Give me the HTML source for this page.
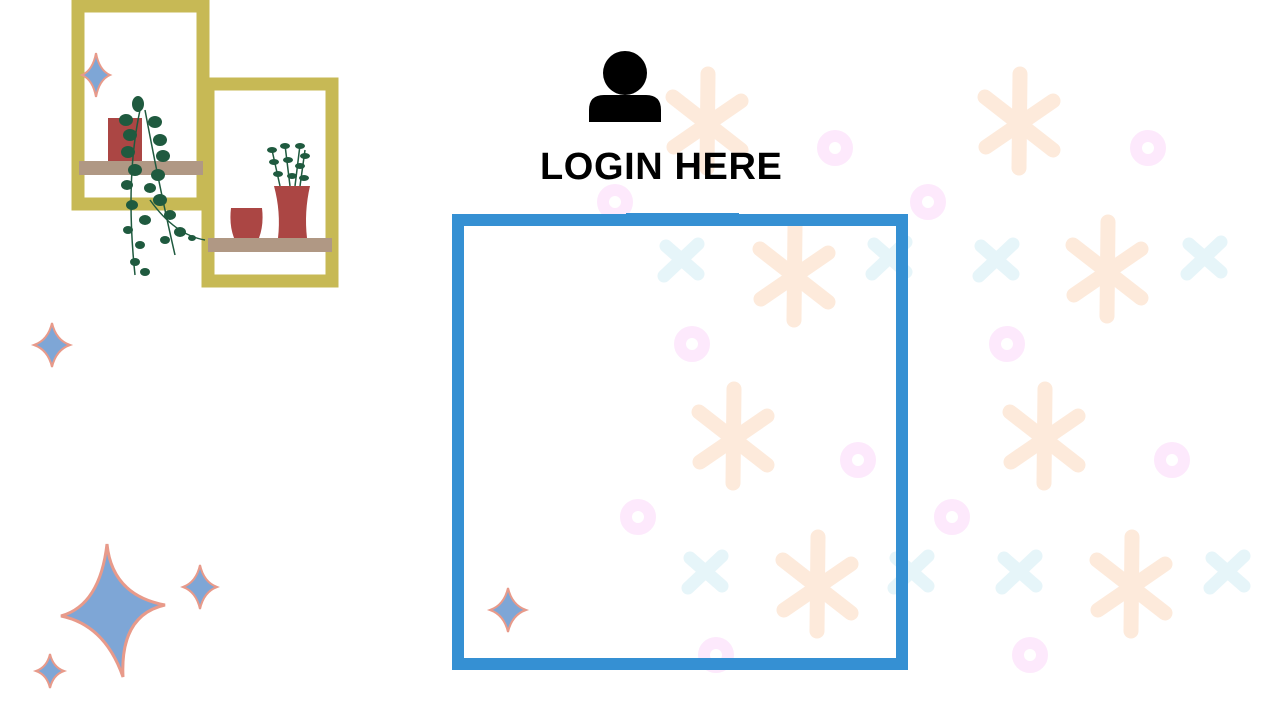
<!DOCTYPE html><html><head><style>html,body{margin:0;padding:0;background:#fff;width:1280px;height:720px;overflow:hidden}
svg{position:absolute;left:0;top:0}
.t{position:absolute;left:540px;top:146px;font-family:"Liberation Sans",sans-serif;font-weight:bold;font-size:38px;letter-spacing:0.6px;color:#000;}
</style></head><body>
<svg width="1280" height="720" viewBox="0 0 1280 720">
<defs>
<g id="ast" stroke="#fdeadb" stroke-width="15" stroke-linecap="round" fill="none">
<path d="M0 -46 L-1 48"/><path d="M-35 -23 L33 30"/><path d="M33 -19 L-34 27"/></g>
<circle id="cir" r="12" fill="none" stroke="#fde9fc" stroke-width="12"/>
<g id="crs" stroke="#e6f5f9" stroke-width="13" stroke-linecap="round"><path d="M-16 -14 L16 14 M16 -16 L-18 16"/></g>
<path id="sp" d="M0 -1 Q0.22 -0.22 1 0 Q0.22 0.22 0 1 Q-0.22 0.22 -1 0 Q-0.22 -0.22 0 -1Z" fill="#7ea6d6" stroke="#e89a8a" vector-effect="non-scaling-stroke" stroke-width="2"/>
</defs>
<g>
<use href="#ast" x="708" y="120"/><use href="#ast" x="1020" y="120"/>
<use href="#ast" x="795" y="272"/><use href="#ast" x="1108" y="268"/>
<use href="#ast" x="734" y="435"/><use href="#ast" x="1045" y="435"/>
<use href="#ast" x="818" y="583"/><use href="#ast" x="1132" y="583"/>
<use href="#cir" x="835" y="148"/><use href="#cir" x="1148" y="148"/>
<use href="#cir" x="928" y="202"/><use href="#cir" x="615" y="202"/>
<use href="#cir" x="692" y="344"/><use href="#cir" x="1007" y="344"/>
<use href="#cir" x="858" y="460"/><use href="#cir" x="1172" y="460"/>
<use href="#cir" x="638" y="517"/><use href="#cir" x="952" y="517"/>
<use href="#cir" x="716" y="655"/><use href="#cir" x="1030" y="655"/>
<use href="#crs" x="682" y="260"/><use href="#crs" x="890" y="258"/>
<use href="#crs" x="997" y="260"/><use href="#crs" x="1205" y="258"/>
<use href="#crs" x="706" y="572"/><use href="#crs" x="912" y="572"/>
<use href="#crs" x="1020" y="572"/><use href="#crs" x="1228" y="572"/>
</g>
<rect x="458" y="220" width="444" height="444" fill="none" stroke="#3590d3" stroke-width="12"/>
<rect x="626" y="213" width="113" height="4" fill="#3590d3"/>
<circle cx="625" cy="73" r="22" fill="#000"/>
<path d="M589 122 L589 110 Q589 95 604 95 L646 95 Q661 95 661 110 L661 122Z" fill="#000"/>
<rect x="78" y="6" width="125" height="198" fill="none" stroke="#c7b955" stroke-width="13"/>
<rect x="208" y="84" width="124" height="197" fill="#fff" stroke="#c7b955" stroke-width="13"/>
<rect x="108" y="118" width="34" height="45" fill="#ab4644"/>
<rect x="79" y="161" width="124" height="14" fill="#b09884"/>
<path d="M231 208 L262 208 Q264 225 259 238 L234 238 Q229 225 231 208Z" fill="#ab4644"/>
<path d="M274 186 L310 186 Q304 212 307 238 L278 238 Q281 212 274 186Z" fill="#ab4644"/>
<rect x="208" y="238" width="124" height="14" fill="#b09884"/>
<g fill="#1f5a3f" stroke="#1f5a3f" stroke-width="1.5">
<path d="M290 186 L285 145 M280 186 L272 150 M300 186 L305 150 M295 186 L300 145" fill="none"/>
<g stroke="none">
<ellipse cx="272" cy="150" rx="5" ry="3"/><ellipse cx="285" cy="146" rx="5" ry="3"/><ellipse cx="300" cy="146" rx="5" ry="3"/><ellipse cx="305" cy="156" rx="5" ry="3"/>
<ellipse cx="274" cy="162" rx="5" ry="3"/><ellipse cx="288" cy="160" rx="5" ry="3"/><ellipse cx="300" cy="166" rx="5" ry="3"/><ellipse cx="278" cy="174" rx="5" ry="3"/><ellipse cx="292" cy="176" rx="5" ry="3"/><ellipse cx="304" cy="178" rx="5" ry="3"/>
</g>
<path d="M140 110 Q125 180 135 275 M145 110 Q160 190 175 255 M150 200 Q175 235 205 240" fill="none"/>
<g stroke="none">
<ellipse cx="138" cy="104" rx="6" ry="8"/><ellipse cx="126" cy="120" rx="7" ry="6"/><ellipse cx="155" cy="122" rx="7" ry="6"/><ellipse cx="130" cy="135" rx="7" ry="6"/><ellipse cx="160" cy="140" rx="7" ry="6"/>
<ellipse cx="128" cy="152" rx="7" ry="6"/><ellipse cx="163" cy="156" rx="7" ry="6"/><ellipse cx="135" cy="170" rx="7" ry="6"/><ellipse cx="158" cy="175" rx="7" ry="6"/>
<ellipse cx="127" cy="185" rx="6" ry="5"/><ellipse cx="150" cy="188" rx="6" ry="5"/><ellipse cx="160" cy="200" rx="7" ry="6"/><ellipse cx="132" cy="205" rx="6" ry="5"/>
<ellipse cx="145" cy="220" rx="6" ry="5"/><ellipse cx="170" cy="215" rx="6" ry="5"/><ellipse cx="128" cy="230" rx="5" ry="4"/><ellipse cx="180" cy="232" rx="6" ry="5"/>
<ellipse cx="140" cy="245" rx="5" ry="4"/><ellipse cx="165" cy="240" rx="5" ry="4"/><ellipse cx="135" cy="262" rx="5" ry="4"/><ellipse cx="145" cy="272" rx="5" ry="4"/><ellipse cx="192" cy="238" rx="4" ry="3"/>
</g></g>
<use href="#sp" transform="translate(96 75) scale(14 22)"/>
<use href="#sp" transform="translate(52 345) scale(18 22)"/>
<use href="#sp" transform="translate(508 610) scale(18 22)"/>
<use href="#sp" transform="translate(200 587) scale(17 22)"/>
<use href="#sp" transform="translate(50 671) scale(14 17)"/>
<path d="M107 544 Q112 595 165 605 Q120 615 123 677 Q105 625 61 616 Q100 605 107 544Z" fill="#7ea6d6" stroke="#e89a8a" stroke-width="3"/>
</svg>
<div class="t">LOGIN HERE</div>
</body></html>
